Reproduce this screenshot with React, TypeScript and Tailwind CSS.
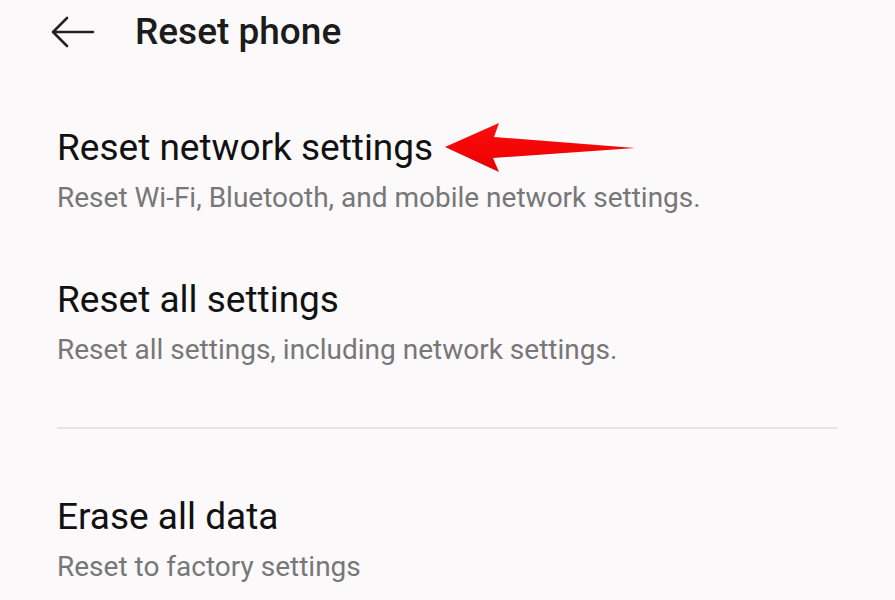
import React from "react";

function BackArrow() {
  return (
    <svg width="48" height="40" viewBox="0 0 48 40" fill="none">
      <path
        d="M44 20H5M18 6L4 20l14 14"
        stroke="#222"
        strokeWidth="2.6"
        strokeLinecap="round"
        strokeLinejoin="round"
      />
    </svg>
  );
}

function RedPointer() {
  // red marker arrow drawn over the screenshot
  return (
    <svg width="196" height="54" viewBox="0 0 196 54" className="absolute left-[442px] top-[121px]">
      <defs>
        <linearGradient id="rg" x1="0" y1="0" x2="0" y2="1">
          <stop offset="0" stopColor="#ff0d0d" />
          <stop offset="1" stopColor="#e80000" />
        </linearGradient>
      </defs>
      <path d="M3 26L57 2L52 16L193 27L51 37L57 51Z" fill="url(#rg)" />
    </svg>
  );
}

function Item({ title, sub }: { title: string; sub: string }) {
  return (
    <div>
      <div className="text-[37px] leading-[44px] text-[#111]">{title}</div>
      <div className="mt-[12px] text-[28px] leading-[32px] text-[#777]">{sub}</div>
    </div>
  );
}

export default function App() {
  return (
    <div
      className="relative h-[600px] w-[895px] overflow-hidden bg-[#fbf9fa]"
      style={{ fontFamily: "Roboto, 'Noto Sans', sans-serif" }}
    >
      <div className="flex h-[64px] items-center pl-[49px]">
        <BackArrow />
        <h1 className="ml-[38px] text-[37px] font-medium leading-[44px] text-[#1c1c1c]">Reset phone</h1>
      </div>
      <div className="px-[57px] pt-[62px]">
        <Item title="Reset network settings" sub="Reset Wi-Fi, Bluetooth, and mobile network settings." />
        <div className="mt-[64px]">
          <Item title="Reset all settings" sub="Reset all settings, including network settings." />
        </div>
        <div className="mt-[61px] h-[2px] w-[781px] bg-[#e6e4e5]" />
        <div className="mt-[66px]">
          <Item title="Erase all data" sub="Reset to factory settings" />
        </div>
      </div>
      <RedPointer />
    </div>
  );
}
